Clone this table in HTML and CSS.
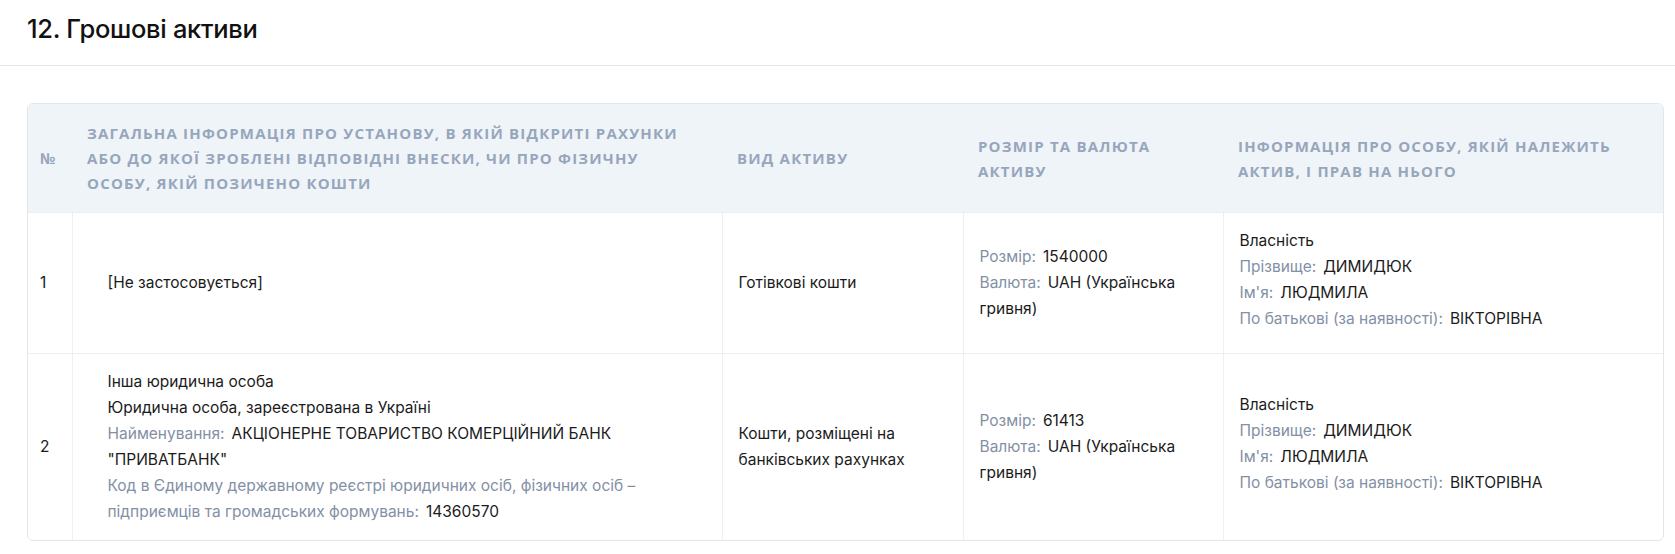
FILE: index.html
```html
<!DOCTYPE html>
<html lang="uk">
<head>
<meta charset="utf-8">
<title>12. Грошові активи</title>
<link rel="stylesheet" href="styles.css">
</head>
<body>
<header class="section-head">
  <h2 class="section-title">12. Грошові активи</h2>
</header>
<main class="section-body">
  <div class="card">
    <table class="assets">
      <colgroup>
        <col class="c-num">
        <col class="c-inst">
        <col class="c-type">
        <col class="c-size">
        <col class="c-owner">
      </colgroup>
      <thead>
        <tr>
          <th>№</th>
          <th>Загальна інформація про установу, в якій відкриті рахунки або до якої зроблені відповідні внески, чи про фізичну особу, якій позичено кошти</th>
          <th>Вид активу</th>
          <th>Розмір та валюта активу</th>
          <th>Інформація про особу, якій належить актив, і прав на нього</th>
        </tr>
      </thead>
      <tbody>
        <tr>
          <td>1</td>
          <td><div class="inst">[Не застосовується]</div></td>
          <td>Готівкові кошти</td>
          <td>
            <div><span class="lbl">Розмір:</span>1540000</div>
            <div><span class="lbl">Валюта:</span>UAH (Українська гривня)</div>
          </td>
          <td>
            <div class="owner">
              <div>Власність</div>
              <div><span class="lbl">Прізвище:</span>ДИМИДЮК</div>
              <div><span class="lbl">Ім'я:</span>ЛЮДМИЛА</div>
              <div><span class="lbl">По батькові (за наявності):</span>ВІКТОРІВНА</div>
            </div>
          </td>
        </tr>
        <tr>
          <td>2</td>
          <td>
            <div class="inst">
              <div>Інша юридична особа</div>
              <div>Юридична особа, зареєстрована в Україні</div>
              <div><span class="lbl">Найменування:</span>АКЦІОНЕРНЕ ТОВАРИСТВО КОМЕРЦІЙНИЙ БАНК "ПРИВАТБАНК"</div>
              <div><span class="lbl">Код в Єдиному державному реєстрі юридичних осіб, фізичних осіб – підприємців та громадських формувань:</span>14360570</div>
            </div>
          </td>
          <td>Кошти, розміщені на банківських рахунках</td>
          <td>
            <div><span class="lbl">Розмір:</span>61413</div>
            <div><span class="lbl">Валюта:</span>UAH (Українська гривня)</div>
          </td>
          <td>
            <div class="owner">
              <div>Власність</div>
              <div><span class="lbl">Прізвище:</span>ДИМИДЮК</div>
              <div><span class="lbl">Ім'я:</span>ЛЮДМИЛА</div>
              <div><span class="lbl">По батькові (за наявності):</span>ВІКТОРІВНА</div>
            </div>
          </td>
        </tr>
      </tbody>
    </table>
  </div>
</main>
</body>
</html>
```

FILE: styles.css
```css
* { box-sizing: border-box; }

body {
  margin: 0;
  background: #ffffff;
  color: #1b1b1b;
  font-family: Inter, "Noto Sans", sans-serif;
}

.section-head {
  padding: 13px 27px 20px;
  border-bottom: 1px solid #e4e7eb;
}

.section-title {
  margin: 0;
  font-size: 25.5px;
  line-height: 32px;
  font-weight: 500;
  color: #111111;
  letter-spacing: -0.3px;
}

.section-body {
  padding: 37px 11px 0 27px;
}

.card {
  border: 1px solid #e1e7ed;
  border-radius: 6px;
  overflow: hidden;
}

.assets {
  width: 100%;
  border-collapse: collapse;
  table-layout: fixed;
}

.c-num { width: 44px; }
.c-inst { width: 650px; }
.c-type { width: 241px; }
.c-size { width: 260px; }

.assets th {
  background: #eff4f8;
  color: #97a6bc;
  font-family: "Open Sans", sans-serif;
  font-weight: 700;
  font-size: 15px;
  line-height: 25px;
  letter-spacing: 1.2px;
  text-transform: uppercase;
  text-align: left;
  vertical-align: middle;
  padding: 17px 16px 16px 15px;
}

.assets th:first-child {
  padding-left: 12px;
  letter-spacing: 0;
}

.assets td {
  font-size: 15.5px;
  line-height: 26px;
  vertical-align: middle;
  padding: 15px 16px;
  border-top: 1px solid #edf0f3;
  border-left: 1px solid #edf0f3;
}

.assets td:first-child {
  border-left: none;
  padding-left: 12px;
}

.inst {
  padding-left: 19px;
}

.owner {
  margin-bottom: 6px;
}

.lbl {
  color: #8390a5;
  margin-right: 7px;
}
```
